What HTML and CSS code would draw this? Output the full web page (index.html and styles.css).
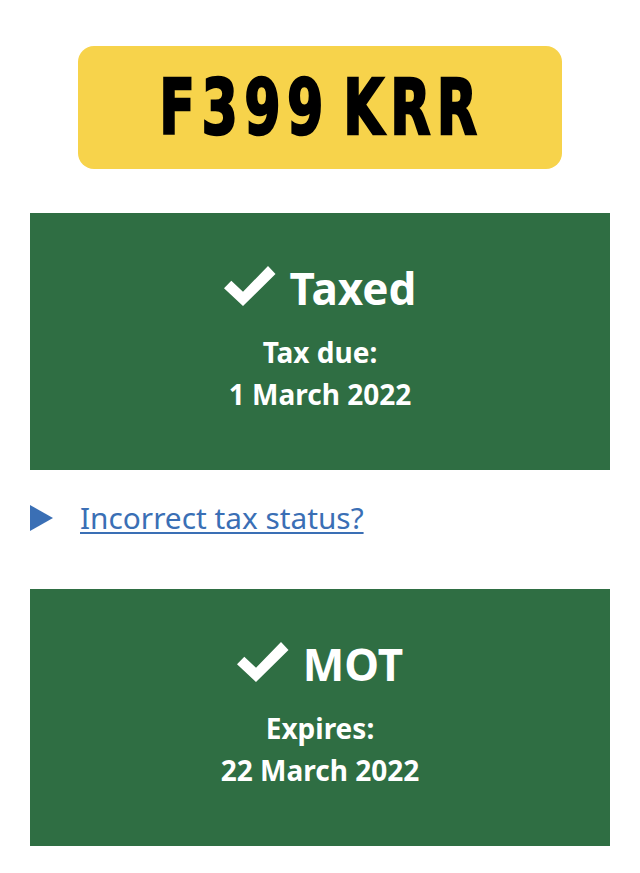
FILE: index.html
```html
<!DOCTYPE html>
<html lang="en">
<head>
<meta charset="utf-8">
<title>Vehicle details</title>
<link rel="stylesheet" href="styles.css">
</head>
<body>
<main class="page">
  <div class="plate"><span class="plate-text">F399 KRR</span></div>

  <section class="status">
    <h2 class="status-title"><svg class="tick" width="52" height="40" viewBox="0 0 52 40" aria-hidden="true"><polygon points="7.3,14.7 0,22.3 19,40 51.5,8 44,0 19,25.7" fill="#ffffff"/></svg>Taxed</h2>
    <p class="status-line">Tax due:</p>
    <p class="status-line">1 March 2022</p>
  </section>

  <div class="details">
    <span class="arrow"></span>
    <a class="details-link" href="#">Incorrect tax status?</a>
  </div>

  <section class="status">
    <h2 class="status-title"><svg class="tick" width="52" height="40" viewBox="0 0 52 40" aria-hidden="true"><polygon points="7.3,14.7 0,22.3 19,40 51.5,8 44,0 19,25.7" fill="#ffffff"/></svg>MOT</h2>
    <p class="status-line">Expires:</p>
    <p class="status-line">22 March 2022</p>
  </section>
</main>
</body>
</html>
```
FILE: styles.css
```css
html, body {
  margin: 0;
  padding: 0;
  background: #ffffff;
}

.page {
  padding: 46px 30px 28px;
  font-family: "Noto Sans", "Liberation Sans", Arial, sans-serif;
  color: #0b0c0c;
}

.plate {
  width: 484px;
  height: 123px;
  margin: 0 auto;
  background: #f7d34b;
  border-radius: 16px;
  display: flex;
  align-items: center;
  justify-content: center;
  overflow: hidden;
}

.plate-text {
  display: inline-block;
  font-family: "DejaVu Sans", sans-serif;
  font-weight: bold;
  font-size: 77px;
  line-height: 1;
  color: #000000;
  -webkit-text-stroke: 2.5px #000000;
  letter-spacing: 9.3px;
  word-spacing: -16px;
  margin-right: -9.3px;
  transform: translateX(-3px) scaleX(0.68);
  white-space: nowrap;
}

.status {
  margin-top: 44px;
  background: #2f6e43;
  color: #ffffff;
  text-align: center;
  padding: 50px 20px 55px;
}

.status-title {
  margin: 0 0 18px;
  font-size: 44px;
  line-height: 50px;
  font-weight: bold;
}

.tick {
  vertical-align: -1px;
  margin-right: 14px;
}

.status-line {
  margin: 0;
  font-size: 28px;
  line-height: 42px;
  font-weight: bold;
}

.details {
  display: flex;
  align-items: center;
  margin: 28px 0 51px;
}

.details + .status {
  margin-top: 0;
}

.arrow {
  width: 0;
  height: 0;
  border-left: 23px solid #3a6fb5;
  border-top: 13.5px solid transparent;
  border-bottom: 13.5px solid transparent;
  margin-right: 27px;
}

.details-link {
  font-size: 29.8px;
  line-height: 40px;
  color: #3a6fb5;
  text-decoration: underline;
  text-decoration-thickness: 2px;
  text-underline-offset: 3px;
}
```
